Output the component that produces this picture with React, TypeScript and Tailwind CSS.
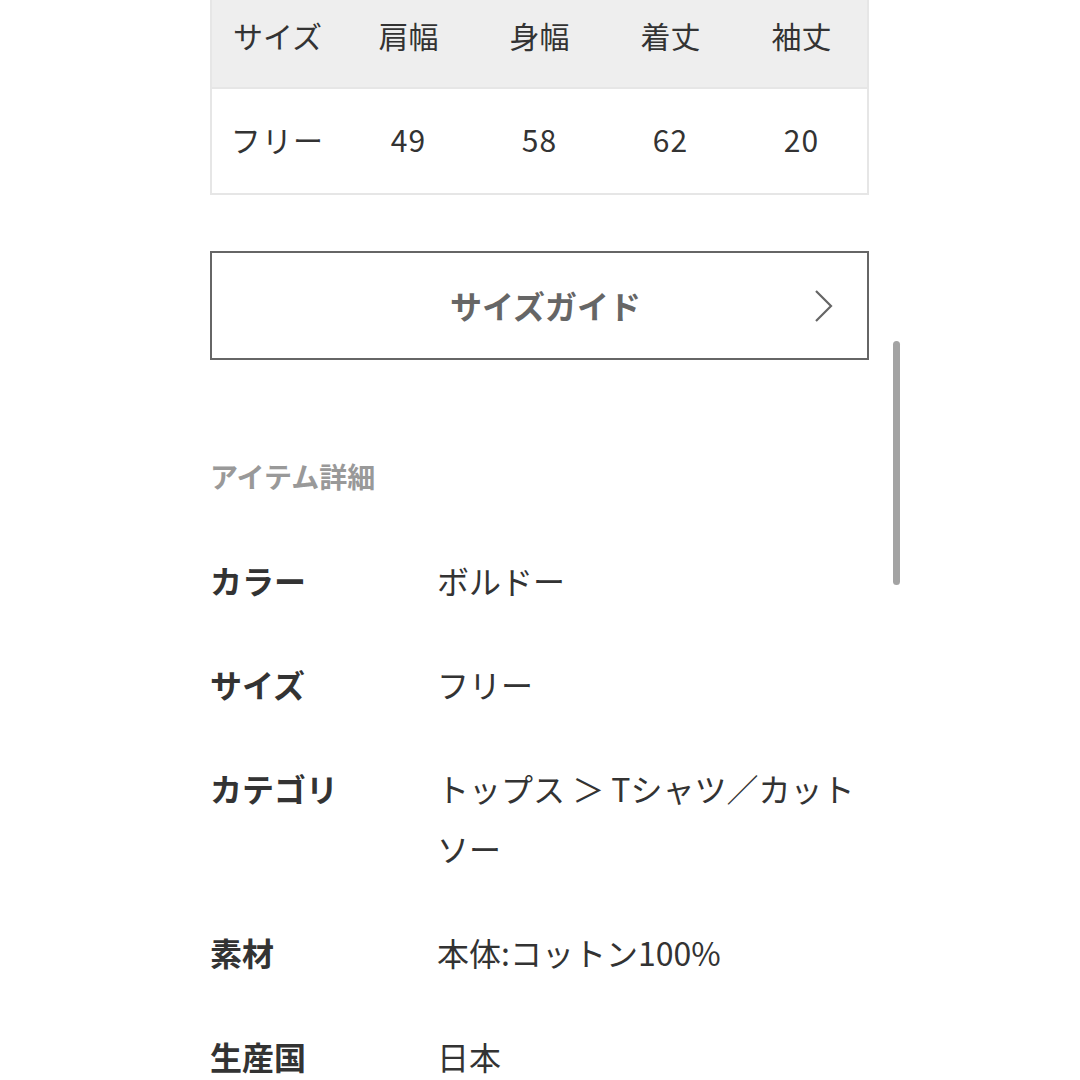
const font = {
  fontFamily: '"Noto Sans CJK JP", "Noto Sans", sans-serif',
};

const sizeCols = ["サイズ", "肩幅", "身幅", "着丈", "袖丈"];
const sizeVals = ["フリー", "49", "58", "62", "20"];

const details: { label: string; value: string }[] = [
  { label: "カラー", value: "ボルドー" },
  { label: "サイズ", value: "フリー" },
  { label: "カテゴリ", value: "トップス ＞ Tシャツ／カットソー" },
  { label: "素材", value: "本体:コットン100%" },
  { label: "生産国", value: "日本" },
];

function SizeTable() {
  return (
    <div className="overflow-hidden">
      <div className="-mt-[16px] border-2 border-[#e6e6e6]">
        <div className="grid grid-cols-5 h-[103px] bg-[#eeeeee] border-b-2 border-[#e6e6e6]">
          {sizeCols.map((c) => (
            <div key={c} className="flex items-center justify-center pb-[3px] text-[30px] text-[#333]">
              {c}
            </div>
          ))}
        </div>
        <div className="grid grid-cols-5 h-[104px] bg-white">
          {sizeVals.map((v) => (
            <div key={v} className="flex items-center justify-center pb-[3px] text-[30px] text-[#333] tracking-[0.04em]">
              {v}
            </div>
          ))}
        </div>
      </div>
    </div>
  );
}

function SizeGuideButton() {
  return (
    <div className="relative mt-[56px] h-[109px] border-2 border-[#666] flex items-center justify-center pl-[12px] pb-[2px]">
      <span className="text-[32px] font-bold text-[#666]">サイズガイド</span>
      <svg
        className="absolute right-[33px] top-1/2 -translate-y-1/2"
        width="20"
        height="34"
        viewBox="0 0 20 34"
        fill="none"
      >
        <path d="M2 2 L17 17 L2 32" stroke="#666" strokeWidth="2.2" />
      </svg>
    </div>
  );
}

function ItemDetails() {
  return (
    <div className="mt-[98px]">
      <h2 className="text-[28px] font-bold text-[#999] leading-[36px]">アイテム詳細</h2>
      <dl className="mt-[56px] flex flex-col gap-[44px]">
        {details.map((d) => (
          <div key={d.label} className="flex leading-[60px] text-[32px] text-[#333]">
            <dt className="w-[227px] shrink-0 font-bold">{d.label}</dt>
            <dd className="flex-1">{d.value}</dd>
          </div>
        ))}
      </dl>
    </div>
  );
}

export default function App() {
  return (
    <div className="relative w-[1080px] h-[1080px] bg-white overflow-hidden" style={font}>
      <div className="w-[659px] ml-[210px]">
        <SizeTable />
        <SizeGuideButton />
        <ItemDetails />
      </div>
      {/* scroll indicator */}
      <div className="absolute left-[893px] top-[341px] w-[7px] h-[244px] rounded-full bg-[#a3a3a3]" />
    </div>
  );
}
